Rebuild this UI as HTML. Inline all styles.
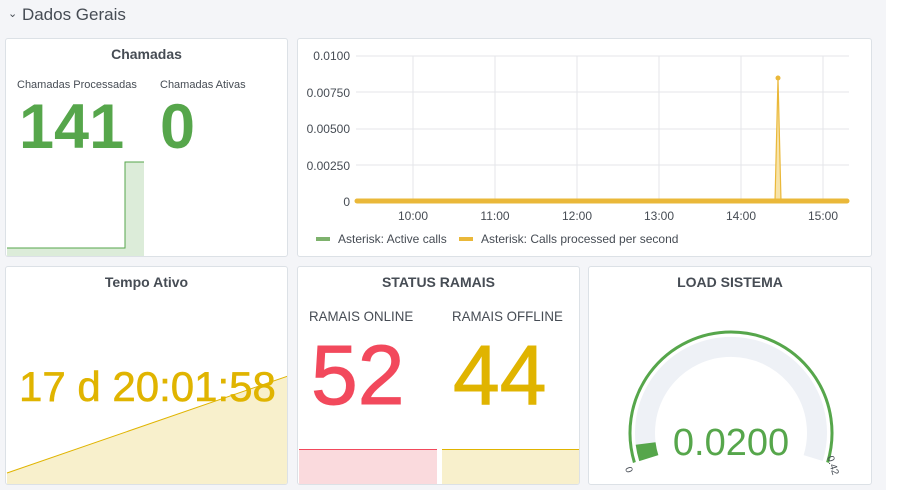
<!DOCTYPE html>
<html><head><meta charset="utf-8"><style>
*{margin:0;padding:0;box-sizing:border-box}
body{width:913px;height:499px;background:#fff;font-family:"Liberation Sans",sans-serif;position:relative;overflow:hidden;color:#464c54}
.bg{position:absolute;left:0;top:0;width:886px;height:490px;background:#f4f5f8}
.p{position:absolute;background:#fff;border:1px solid #dce1e6;border-radius:3px;overflow:hidden}
.t{position:absolute;left:0;right:0;top:7px;text-align:center;font-size:14px;font-weight:bold;color:#464c54}
.a{position:absolute;white-space:nowrap}
</style></head><body>
<div class="bg"></div>
<div class="a" style="left:8px;top:5px;font-size:17px;color:#464c54"><span style="font-size:11px;position:relative;top:-3px">&#8964;</span> Dados Gerais</div>

<div class="p" style="left:5px;top:38px;width:283px;height:219px">
 <div class="t">Chamadas</div>
 <div class="a" style="left:11px;top:40px;font-size:11px">Chamadas Processadas</div>
 <div class="a" style="left:154px;top:40px;font-size:11px">Chamadas Ativas</div>
 <div class="a" style="left:13px;top:52px;font-size:63px;font-weight:bold;color:#56a64b">141</div>
 <div class="a" style="left:154px;top:52px;font-size:63px;font-weight:bold;color:#56a64b">0</div>
 <svg class="a" style="left:0;top:0" width="283" height="219"><polygon points="1,209 119,209 119,123 138,123 138,219 1,219" fill="#dcecd9"/><polyline points="1,209 119,209 119,123 138,123" fill="none" stroke="#56a64b" stroke-width="1"/></svg>
</div>

<div class="p" style="left:297px;top:38px;width:575px;height:219px">
 <svg class="a" style="left:0;top:0" width="575" height="219" font-family="Liberation Sans" font-size="12" fill="#464c54">
  <g stroke="#e4e6ea" stroke-width="1">
   <line x1="58" y1="17" x2="551" y2="17"/><line x1="58" y1="53" x2="551" y2="53"/><line x1="58" y1="90" x2="551" y2="90"/><line x1="58" y1="126" x2="551" y2="126"/>
   <line x1="115" y1="17" x2="115" y2="162"/><line x1="197" y1="17" x2="197" y2="162"/><line x1="279" y1="17" x2="279" y2="162"/><line x1="361" y1="17" x2="361" y2="162"/><line x1="443" y1="17" x2="443" y2="162"/><line x1="525" y1="17" x2="525" y2="162"/>
  </g>
  <text x="52" y="21" text-anchor="end">0.0100</text><text x="52" y="58" text-anchor="end">0.00750</text><text x="52" y="94" text-anchor="end">0.00500</text><text x="52" y="131" text-anchor="end">0.00250</text><text x="52" y="167" text-anchor="end">0</text>
  <text x="115" y="181" text-anchor="middle">10:00</text><text x="197" y="181" text-anchor="middle">11:00</text><text x="279" y="181" text-anchor="middle">12:00</text><text x="361" y="181" text-anchor="middle">13:00</text><text x="443" y="181" text-anchor="middle">14:00</text><text x="525" y="181" text-anchor="middle">15:00</text>
  <polygon points="477,162 480,39 483,162" fill="#f7e3a8"/>
  <polyline points="477,162 480,39 483,162" fill="none" stroke="#eab839" stroke-width="1.2"/>
  <circle cx="480" cy="39" r="2.5" fill="#eab839"/>
  <line x1="59" y1="162" x2="549" y2="162" stroke="#eab839" stroke-width="5" stroke-linecap="round"/>
  <rect x="18" y="198" width="14" height="4" fill="#7eb26d"/><text x="40" y="204">Asterisk: Active calls</text>
  <rect x="161" y="198" width="14" height="4" fill="#eab839"/><text x="183" y="204">Asterisk: Calls processed per second</text>
 </svg>
</div>

<div class="p" style="left:5px;top:266px;width:283px;height:219px">
 <svg class="a" style="left:0;top:0" width="283" height="219"><polygon points="1,206 282,109 282,219 1,219" fill="#f8f0cc"/><line x1="1" y1="206" x2="282" y2="109" stroke="#e0b400" stroke-width="1"/></svg>
 <div class="t">Tempo Ativo</div>
 <div class="a" style="left:13px;top:96px;font-size:42px;color:#e0b400;-webkit-text-stroke:0.6px #e0b400">17 d 20:01:58</div>
</div>

<div class="p" style="left:297px;top:266px;width:283px;height:219px">
 <div class="t">STATUS RAMAIS</div>
 <div class="a" style="left:11px;top:41px;font-size:14px;transform:scaleX(0.95);transform-origin:0 0">RAMAIS ONLINE</div>
 <div class="a" style="left:154px;top:41px;font-size:14px;transform:scaleX(0.95);transform-origin:0 0">RAMAIS OFFLINE</div>
 <div class="a" style="left:13px;top:60px;font-size:84px;color:#f2495c;-webkit-text-stroke:1px #f2495c">52</div>
 <div class="a" style="left:155px;top:60px;font-size:84px;color:#e0b400;-webkit-text-stroke:1px #e0b400">44</div>
 <div class="a" style="left:1px;top:182px;width:138px;height:37px;background:#fadadd;border-top:1px solid #f2495c"></div>
 <div class="a" style="left:144px;top:182px;width:137px;height:37px;background:#f8f0cc;border-top:1px solid #e0b400"></div>
</div>

<div class="p" style="left:588px;top:266px;width:284px;height:219px">
 <div class="t">LOAD SISTEMA</div>
 <svg class="a" style="left:0;top:0" width="284" height="219" font-family="Liberation Sans">
  <path d="M59.8,191.1 A86,86 0 1 1 224.2,191.1" fill="none" stroke="#eef1f6" stroke-width="20"/>
  <path d="M59.8,191.1 A86,86 0 0 1 56.6,176.5" fill="none" stroke="#56a64b" stroke-width="20"/>
  <path d="M45.4,195.5 A101,101 0 1 1 238.6,195.5" fill="none" stroke="#56a64b" stroke-width="3"/>
  <text x="142" y="188" text-anchor="middle" font-size="38" fill="#56a64b">0.0200</text>
  <text x="36" y="201" font-size="10" fill="#464c54" transform="rotate(73 36 201)">0</text>
  <text x="238" y="190" font-size="10" fill="#464c54" transform="rotate(73 238 190)">0.42</text>
 </svg>
</div>
</body></html>
